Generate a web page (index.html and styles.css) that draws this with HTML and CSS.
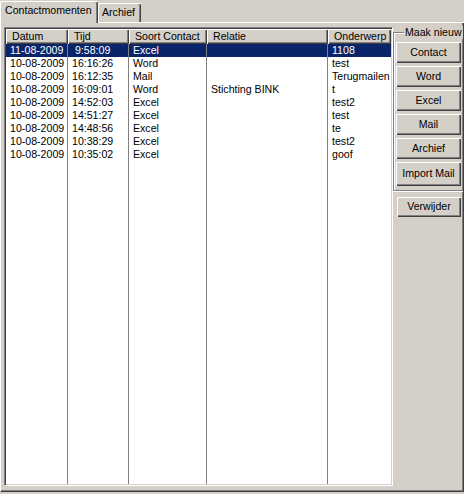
FILE: index.html
```html
<!DOCTYPE html>
<html>
<head>
<meta charset="utf-8">
<link rel="stylesheet" href="styles.css">
</head>
<body>
<div class="window">
  <div class="tabs">
    <div class="tab active">Contactmomenten</div>
    <div class="tab">Archief</div>
    <div class="tab-fill"></div>
  </div>
  <div class="panel">
    <div class="list">
      <div class="header">
        <div class="hcell c1">Datum</div>
        <div class="hcell c2">Tijd</div>
        <div class="hcell c3">Soort Contact</div>
        <div class="hcell c4">Relatie</div>
        <div class="hcell c5">Onderwerp</div>
      </div>
      <div class="rows">
        <div class="row selected"><div class="cell c1">11-08-2009</div><div class="cell c2">&nbsp;9:58:09</div><div class="cell c3">Excel</div><div class="cell c4"></div><div class="cell c5">1108</div></div>
        <div class="row"><div class="cell c1">10-08-2009</div><div class="cell c2">16:16:26</div><div class="cell c3">Word</div><div class="cell c4"></div><div class="cell c5">test</div></div>
        <div class="row"><div class="cell c1">10-08-2009</div><div class="cell c2">16:12:35</div><div class="cell c3">Mail</div><div class="cell c4"></div><div class="cell c5">Terugmailen</div></div>
        <div class="row"><div class="cell c1">10-08-2009</div><div class="cell c2">16:09:01</div><div class="cell c3">Word</div><div class="cell c4">Stichting BINK</div><div class="cell c5">t</div></div>
        <div class="row"><div class="cell c1">10-08-2009</div><div class="cell c2">14:52:03</div><div class="cell c3">Excel</div><div class="cell c4"></div><div class="cell c5">test2</div></div>
        <div class="row"><div class="cell c1">10-08-2009</div><div class="cell c2">14:51:27</div><div class="cell c3">Excel</div><div class="cell c4"></div><div class="cell c5">test</div></div>
        <div class="row"><div class="cell c1">10-08-2009</div><div class="cell c2">14:48:56</div><div class="cell c3">Excel</div><div class="cell c4"></div><div class="cell c5">te</div></div>
        <div class="row"><div class="cell c1">10-08-2009</div><div class="cell c2">10:38:29</div><div class="cell c3">Excel</div><div class="cell c4"></div><div class="cell c5">test2</div></div>
        <div class="row"><div class="cell c1">10-08-2009</div><div class="cell c2">10:35:02</div><div class="cell c3">Excel</div><div class="cell c4"></div><div class="cell c5">goof</div></div>
      </div>
    </div>
    <div class="side">
      <div class="group">
        <div class="legend">Maak nieuw</div>
        <div class="btn">Contact</div>
        <div class="btn">Word</div>
        <div class="btn">Excel</div>
        <div class="btn">Mail</div>
        <div class="btn">Archief</div>
        <div class="btn tall">Import Mail</div>
      </div>
      <div class="btn del">Verwijder</div>
    </div>
  </div>
</div>
</body>
</html>
```
FILE: styles.css
```css
* { box-sizing: border-box; }
html, body { margin: 0; padding: 0; }
body {
  background: #d4d0c8;
  font-family: "Liberation Sans", Arial, sans-serif;
  font-size: 10.6px;
  color: #000;
  width: 464px;
  height: 494px;
  overflow: hidden;
}
.window {
  width: 464px;
  height: 492px;
  display: flex;
  flex-direction: column;
}
.tabs {
  display: flex;
  align-items: flex-end;
  height: 23px;
  flex: none;
}
.tab {
  height: 20px;
  width: 43px;
  padding: 2px 0 0 3px;
  line-height: 13px;
  border-top: 1px solid #fff;
  border-left: 1px solid #fff;
  border-bottom: 1px solid #fff;
  box-shadow: inset -1px 0 #404040, inset -2px 0 #808080;
  border-top-left-radius: 2px;
  border-top-right-radius: 2px;
  white-space: nowrap;
}
.tab.active {
  height: 22px;
  width: 98px;
  padding: 2px 0 0 4px;
  border-bottom: none;
}
.tab-fill {
  flex: 1;
  border-bottom: 1px solid #fff;
}
.panel {
  flex: 1;
  display: flex;
  border-left: 1px solid #fff;
  border-right: 1px solid #404040;
  border-bottom: 1px solid #404040;
  box-shadow: inset -1px -1px #808080;
  padding: 4px 0 4px 3px;
  overflow: hidden;
  min-height: 0;
}
.list {
  width: 389px;
  height: 459px;
  flex: none;
  background: #fff;
  border: 1px solid;
  border-color: #808080 #fff #fff #808080;
  box-shadow: inset 1px 1px #404040, inset -1px -1px #d4d0c8;
  padding: 1px;
  display: flex;
  flex-direction: column;
  overflow: hidden;
}
.header {
  display: flex;
  height: 15px;
  flex: none;
}
.hcell {
  background: #d4d0c8;
  line-height: 15px;
  padding-left: 6px;
  box-shadow: inset 1px 1px #fff, inset -1px -1px #404040, inset -2px -2px #808080;
  white-space: nowrap;
  overflow: hidden;
}
.c1 { width: 62px; flex: none; }
.c2 { width: 61px; flex: none; }
.c3 { width: 78px; flex: none; }
.c4 { width: 121px; flex: none; }
.c5 { flex: 1; min-width: 0; }
.rows {
  flex: 1;
  background:
    linear-gradient(#808080, #808080) no-repeat 61px 0 / 1px 100%,
    linear-gradient(#808080, #808080) no-repeat 122px 0 / 1px 100%,
    linear-gradient(#808080, #808080) no-repeat 200px 0 / 1px 100%,
    linear-gradient(#808080, #808080) no-repeat 321px 0 / 1px 100%,
    #fff;
}
.row {
  display: flex;
  height: 13px;
  line-height: 13px;
}
.cell {
  padding-left: 4px;
  white-space: nowrap;
  overflow: hidden;
}
.cell.c1, .cell.c2, .cell.c3, .cell.c4 {
  border-right: 1px solid #808080;
}
.row.selected {
  background: #0a246a;
  color: #fff;
}
.side {
  flex: 1;
  display: flex;
  flex-direction: column;
  min-width: 0;
}
.group {
  margin-top: 5px;
  border: 1px solid #808080;
  border-right: none;
  box-shadow: inset 1px 1px #fff, 0 1px #fff;
  padding: 0 0 4px 2px;
  display: flex;
  flex-direction: column;
  gap: 3px;
}
.legend {
  margin: -7px 0 0 8px;
  padding: 0 1px;
  line-height: 13px;
  height: 13px;
  background: #d4d0c8;
  align-self: flex-start;
  white-space: nowrap;
}
.btn {
  width: 65px;
  height: 21px;
  line-height: 20px;
  text-align: center;
  background: #d4d0c8;
  box-shadow: inset 1px 1px #fff, inset -1px -1px #404040, inset -2px -2px #808080;
  white-space: nowrap;
}
.group .legend + .btn { margin-top: 0; }
.btn.tall {
  height: 24px;
  line-height: 23px;
}
.btn.del {
  margin: 6px 0 0 4px;
  width: 64px;
  height: 20px;
  line-height: 19px;
}
```
